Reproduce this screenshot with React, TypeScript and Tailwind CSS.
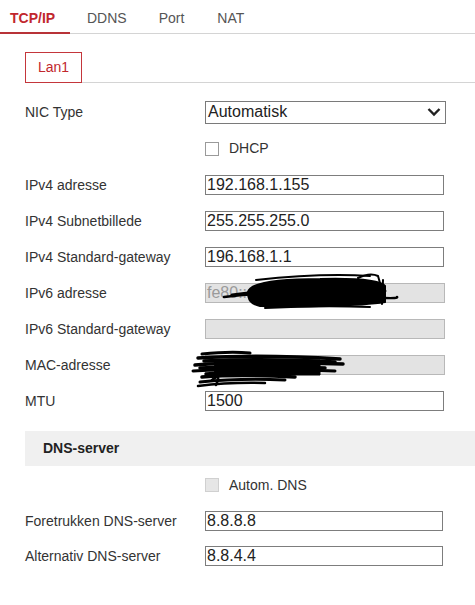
const tabs = ["TCP/IP", "DDNS", "Port", "NAT"];

const fields = [
  { label: "IPv4 adresse", value: "192.168.1.155" },
  { label: "IPv4 Subnetbillede", value: "255.255.255.0" },
  { label: "IPv4 Standard-gateway", value: "196.168.1.1" },
];

const Scribble6 = () => (
  <svg
    className="absolute left-[15px] top-[-10px] w-[185px] h-[40px] pointer-events-none"
    viewBox="0 0 185 40"
    fill="none"
    stroke="black"
    strokeLinecap="round"
  >
    <path
      d="M28 19 C30 9 60 6 100 6 C140 5 160 7 165 13 L165 29 C140 33 80 34 40 33 C30 31 28 26 28 19 Z"
      fill="black"
      strokeWidth="2"
    />
    <path d="M4 24 Q60 17 120 22 T177 24" strokeWidth="2.5" />
    <path d="M36 7 Q100 0 150 3" strokeWidth="2" />
    <path d="M138 5 Q150 -1 158 3 L160 10" strokeWidth="2" />
    <path d="M163 7 L162 31" strokeWidth="2" />
    <path d="M45 35 Q100 32 150 34" strokeWidth="2" />
    <path d="M12 22 Q80 12 165 18" strokeWidth="3" />
  </svg>
);

const ScribbleMac = () => (
  <svg
    className="absolute left-[-15px] top-[-5px] w-[160px] h-[40px] pointer-events-none"
    viewBox="0 0 160 40"
    fill="none"
    stroke="black"
    strokeLinecap="round"
  >
    <path d="M12 4 Q40 1 60 3" strokeWidth="3" />
    <path d="M8 8 Q70 4 150 9" strokeWidth="3.5" />
    <path d="M14 11 Q80 8 145 12" strokeWidth="3.5" />
    <path d="M5 15 Q60 11 153 14" strokeWidth="3.5" />
    <path d="M10 18 Q70 15 135 18" strokeWidth="3.5" />
    <path d="M3 21 Q60 18 145 21" strokeWidth="3" />
    <path d="M16 24 Q60 21 115 23" strokeWidth="3.5" />
    <path d="M12 27 Q50 24 105 27" strokeWidth="3.5" />
    <path d="M22 30 Q32 22 26 35" strokeWidth="2.5" />
    <path d="M10 32 Q50 28 95 30" strokeWidth="3" />
    <path d="M8 36 Q40 32 75 33" strokeWidth="2.5" />
    <path d="M25 10 L130 10 L130 25 L25 25 Z" fill="black" strokeWidth="1" />
  </svg>
);

const Label = ({ children }: { children: React.ReactNode }) => (
  <div className="w-[180px] shrink-0 text-[14px] text-[#333]">{children}</div>
);

const TextBox = ({ value }: { value: string }) => (
  <div className="w-[239px] h-[20px] border border-[#7d7d7d] bg-white text-[16px] leading-[18px] pl-[1px] text-[#222]">
    {value}
  </div>
);

const DisabledBox = ({ value }: { value?: string }) => (
  <div className="w-[240px] h-[20px] border border-[#b8b8b8] bg-[#e3e3e3] text-[16px] leading-[18px] pl-[1px] text-[#9a9a9a]">
    {value}
  </div>
);

export default function App() {
  return (
    <div className="w-[475px] h-[605px] bg-white font-['Liberation_Sans',Arial,sans-serif] overflow-hidden">
      <div className="flex h-[34px] border-b border-[#d4d4d4]">
        {tabs.map((tab, i) =>
          i === 0 ? (
            <div
              key={tab}
              className="w-[70px] pl-[10px] pt-[8px] text-[14px] font-bold text-[#c1272d] border-b-2 border-[#b83338] -mb-px"
            >
              {tab}
            </div>
          ) : (
            <div key={tab} className="pt-[8px] text-[14px] text-[#555]" style={{ marginLeft: i === 1 ? 17 : i === 2 ? 32 : 33 }}>
              {tab}
            </div>
          )
        )}
      </div>

      <div className="pl-[25px]">
        <div className="flex mt-[18px] border-b border-[#d4d4d4]">
          <div className="w-[57px] h-[31px] border border-[#c4363b] -mb-px text-[14px] text-[#c1272d] flex items-center justify-center">
            Lan1
          </div>
        </div>

        <div className="flex items-center h-[36px] mt-[11px]">
          <Label>NIC Type</Label>
          <div className="w-[241px] h-[23px] border border-[#7a7a7a] bg-white flex items-center justify-between pl-[2px] pr-[4px] text-[16px] text-[#222]">
            <span>Automatisk</span>
            <svg width="14" height="10" viewBox="0 0 14 10" fill="none" stroke="#222" strokeWidth="2.4">
              <path d="M1.5 2 L7 7.5 L12.5 2" />
            </svg>
          </div>
        </div>

        <div className="flex items-center h-[37px]">
          <div className="w-[180px] shrink-0" />
          <div className="w-[14px] h-[14px] border border-[#9a9a9a] bg-white" />
          <span className="ml-[10px] text-[14px] text-[#333]">DHCP</span>
        </div>

        {fields.map((f) => (
          <div key={f.label} className="flex items-center h-[36px]">
            <Label>{f.label}</Label>
            <TextBox value={f.value} />
          </div>
        ))}

        <div className="flex items-center h-[36px]">
          <Label>IPv6 adresse</Label>
          <div className="relative">
            <DisabledBox value="fe80::" />
            <Scribble6 />
          </div>
        </div>

        <div className="flex items-center h-[36px]">
          <Label>IPv6 Standard-gateway</Label>
          <DisabledBox />
        </div>

        <div className="flex items-center h-[36px]">
          <Label>MAC-adresse</Label>
          <div className="relative">
            <DisabledBox />
            <ScribbleMac />
          </div>
        </div>

        <div className="flex items-center h-[36px]">
          <Label>MTU</Label>
          <TextBox value="1500" />
        </div>

        <div className="mt-[12px] h-[35px] bg-[#f0f0f0] flex items-center pl-[18px] text-[14px] font-bold text-[#222]">
          DNS-server
        </div>

        <div className="flex items-center h-[38px]">
          <div className="w-[180px] shrink-0" />
          <div className="w-[14px] h-[14px] border border-[#d0d0d0] bg-[#e6e6e6]" />
          <span className="ml-[10px] text-[14px] text-[#333]">Autom. DNS</span>
        </div>

        <div className="flex items-center h-[34px]">
          <Label>Foretrukken DNS-server</Label>
          <div className="w-[238px] h-[20px] border border-[#7d7d7d] bg-white text-[16px] leading-[18px] pl-[1px] text-[#222]">
            8.8.8.8
          </div>
        </div>

        <div className="flex items-center h-[36px]">
          <Label>Alternativ DNS-server</Label>
          <div className="w-[238px] h-[20px] border border-[#7d7d7d] bg-white text-[16px] leading-[18px] pl-[1px] text-[#222]">
            8.8.4.4
          </div>
        </div>
      </div>
    </div>
  );
}
